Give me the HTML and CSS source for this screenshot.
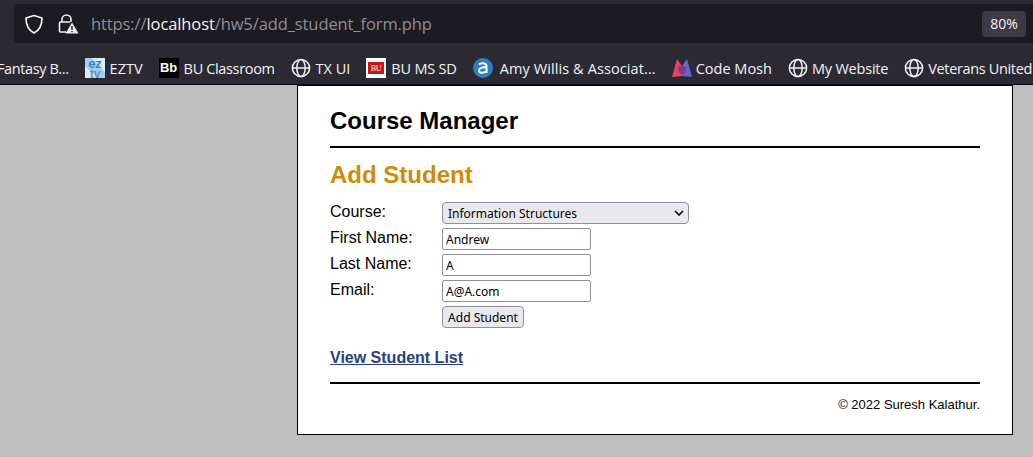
FILE: index.html
```html
<!DOCTYPE html>
<html lang="en">
<head>
<meta charset="UTF-8">
<meta name="viewport" content="width=device-width, initial-scale=1.0">
<title>Course Manager</title>
<link rel="stylesheet" href="styles.css">
</head>
<body>

<div class="browser">
  <div class="urlbar">
    <svg class="shield" width="20" height="22" viewBox="0 0 20 22" fill="none" stroke="#f2f2f4" stroke-width="1.7"><path d="M10 2.5 L18 5 C18 12 16 17 10 20 C4 17 2 12 2 5 Z" stroke-linejoin="round"/></svg>
    <svg class="lock" width="22" height="22" viewBox="0 0 22 22" fill="none"><path d="M5 9 V6.5 a4.5 4.5 0 0 1 9 0 V9" stroke="#f2f2f4" stroke-width="1.6"/><path d="M9 19 H3.5 a1 1 0 0 1 -1 -1 V10 a1 1 0 0 1 1 -1 H13" stroke="#f2f2f4" stroke-width="1.6"/><path d="M15 9.5 L21.5 20.5 H8.5 Z" fill="#f2f2f4"/><path d="M15 13 V17 M15 18 V19.2" stroke="#1c1b22" stroke-width="1.4"/></svg>
    <div class="url">https://<span class="host">localhost</span>/hw5/add_student_form.php</div>
    <div class="zoom">80%</div>
  </div>
  <div class="bookmarks">
    <span class="mark cut">Fantasy B...</span>
    <span class="mark">
      <svg width="20" height="20" viewBox="0 0 20 20"><rect width="20" height="20" fill="#dcebfa"/><path d="M0 0 L7 0 L20 14 L20 20 L12 20 L0 8 Z" fill="#a9cdf2"/><text x="10" y="10" font-size="13" font-weight="bold" font-family="Liberation Sans, sans-serif" fill="#3f7fd0" text-anchor="middle">ez</text><text x="10" y="19.5" font-size="12" font-weight="bold" font-family="Liberation Sans, sans-serif" fill="#5a94da" text-anchor="middle">tv</text></svg>
      EZTV
    </span>
    <span class="mark tight">
      <span class="bb">Bb</span>
      BU Classroom
    </span>
    <span class="mark">
      <svg width="20" height="20" viewBox="0 0 20 20" fill="none" stroke="#f2f2f4" stroke-width="1.5"><circle cx="10" cy="10" r="8.6"/><ellipse cx="10" cy="10" rx="4.2" ry="8.6"/><path d="M1.4 10 H18.6"/></svg>
      TX UI
    </span>
    <span class="mark slim">
      <svg width="20" height="20" viewBox="0 0 20 20"><rect width="20" height="20" fill="#fff"/><rect x="2" y="4" width="16" height="12" fill="#cc1414"/><text x="10" y="13" font-size="8" font-family="Liberation Serif, serif" fill="#fff" text-anchor="middle">BU</text></svg>
      BU MS SD
    </span>
    <span class="mark wide">
      <svg width="20" height="20" viewBox="0 0 20 20" fill="none"><circle cx="10" cy="10" r="10" fill="#2a7fc4"/><path d="M6 6.5 C8 4.5 13.5 4.5 13.5 8.5 V15 M13.5 9.5 C9 9 6 10 6 12.5 C6 15.5 11 15.5 13.5 13" stroke="#fff" stroke-width="2"/></svg>
      Amy Willis &amp; Associat...
    </span>
    <span class="mark close">
      <svg width="20" height="20" viewBox="0 0 20 20"><path d="M5 1 L10 8 L10 18 L0 19 Z" fill="#ec3f63"/><path d="M15 1 L10 8 L10 18 L20 19 Z" fill="#6a62c8"/><path d="M6 9 L10 7 L14 9 L13 15 L10 17 L7 15 Z" fill="#7a3c8c"/></svg>
      Code Mosh
    </span>
    <span class="mark close slim">
      <svg width="20" height="20" viewBox="0 0 20 20" fill="none" stroke="#f2f2f4" stroke-width="1.5"><circle cx="10" cy="10" r="8.6"/><ellipse cx="10" cy="10" rx="4.2" ry="8.6"/><path d="M1.4 10 H18.6"/></svg>
      My Website
    </span>
    <span class="mark close tight">
      <svg width="20" height="20" viewBox="0 0 20 20" fill="none" stroke="#f2f2f4" stroke-width="1.5"><circle cx="10" cy="10" r="8.6"/><ellipse cx="10" cy="10" rx="4.2" ry="8.6"/><path d="M1.4 10 H18.6"/></svg>
      Veterans United
    </span>
  </div>
</div>

<div class="page">
  <div class="sheet">
    <header class="top">
      <h1>Course Manager</h1>
    </header>
    <main>
      <h2>Add Student</h2>
      <form class="student-form">
        <label>Course:</label>
        <div class="select-wrap">
          <select class="course">
            <option>Information Structures</option>
          </select>
          <svg class="chevron" width="10" height="6" viewBox="0 0 10 6" fill="none" stroke="#000" stroke-width="1.6"><path d="M1 1 L5 5 L9 1"/></svg>
        </div>
        <label>First Name:</label>
        <input type="text" value="Andrew">
        <label>Last Name:</label>
        <input type="text" value="A">
        <label>Email:</label>
        <input type="text" value="A@A.com">
        <span></span>
        <div><button type="button">Add Student</button></div>
      </form>
      <p class="list-link"><a href="#">View Student List</a></p>
    </main>
    <footer class="bottom">
      <p>&copy; 2022 Suresh Kalathur.</p>
    </footer>
  </div>
</div>

</body>
</html>
```

FILE: styles.css
```css
html, body {
  margin: 0;
  padding: 0;
  height: 457px;
  overflow: hidden;
}
body {
  font-family: "Liberation Sans", Arial, sans-serif;
  background-color: #bfbfbf;
}

/* browser chrome */
.browser {
  box-sizing: border-box;
  height: 85px;
  padding-top: 4px;
  background-color: #2b2a33;
  border-bottom: 1px solid #0c0c0d;
  font-family: "Open Sans", sans-serif;
  color: #f2f2f4;
}
.urlbar {
  height: 39px;
  margin-left: 14px;
  background-color: #1c1b22;
  border-radius: 4px 0 0 4px;
  display: flex;
  align-items: center;
}
.shield {
  margin-left: 10px;
}
.lock {
  margin-left: 13px;
}
.url {
  margin-left: 12px;
  font-size: 16.5px;
  letter-spacing: -0.1px;
  color: #8f8f94;
}
.host {
  color: #f4f4f6;
}
.zoom {
  margin-left: auto;
  margin-right: 7px;
  width: 44px;
  height: 26px;
  line-height: 26px;
  text-align: center;
  border-radius: 4px;
  font-size: 14px;
  background-color: #3c3b46;
}
.bookmarks {
  margin-top: 9px;
  height: 32px;
  display: flex;
  align-items: center;
  gap: 16px;
  font-size: 14.5px;
  white-space: nowrap;
  overflow: hidden;
}
.mark {
  display: flex;
  align-items: center;
  gap: 5px;
  flex-shrink: 0;
}
.cut {
  margin-left: -3px;
  letter-spacing: -0.4px;
}
.tight {
  letter-spacing: -0.35px;
}
.slim {
  letter-spacing: -0.2px;
}
.wide {
  gap: 7px;
  letter-spacing: 0.1px;
}
.close {
  gap: 4px;
}
.bb {
  width: 20px;
  height: 20px;
  line-height: 20px;
  text-align: center;
  background-color: #000;
  font-family: "Liberation Sans", sans-serif;
  font-weight: bold;
  font-size: 13px;
  letter-spacing: 0;
  color: #fff;
}

/* page */
.page {
  padding-left: 297px;
}
.sheet {
  width: 650px;
  height: 348px;
  padding: 0 32px;
  background-color: #fff;
  border: 1px solid #000;
}
.top {
  border-bottom: 2px solid #000;
  height: 60px;
}
h1 {
  margin: 0;
  padding-top: 21px;
  font-size: 24px;
  line-height: 28px;
  color: #000;
}
h2 {
  margin: 0;
  padding-top: 13px;
  font-size: 24px;
  line-height: 28px;
  color: #cf8a08;
}
.student-form {
  margin-top: 13px;
  display: grid;
  grid-template-columns: 112px 1fr;
  grid-auto-rows: 26px;
  font-size: 16px;
}
.student-form label {
  padding-top: 1px;
  line-height: 18px;
}
.student-form input {
  box-sizing: border-box;
  width: 149px;
  height: 22px;
  padding: 1px 3px;
  border: 1px solid #8f8f9d;
  border-radius: 2px;
  font-family: "Noto Sans", sans-serif;
  font-size: 12px;
  color: #000;
}
.select-wrap {
  position: relative;
  width: 247px;
  height: 22px;
}
.course {
  appearance: none;
  box-sizing: border-box;
  width: 247px;
  height: 22px;
  padding-left: 5px;
  border: 1px solid #8f8f9d;
  border-radius: 4px;
  background-color: #e9e9ed;
  font-family: "Noto Sans", sans-serif;
  font-size: 12px;
  color: #000;
}
.chevron {
  position: absolute;
  right: 5px;
  top: 8px;
}
button {
  box-sizing: border-box;
  width: 82px;
  height: 22px;
  padding: 0;
  border: 1px solid #8f8f9d;
  border-radius: 4px;
  background-color: #e9e9ed;
  font-family: "Noto Sans", sans-serif;
  font-size: 12px;
  color: #000;
}
.list-link {
  margin: 17px 0 0;
  font-size: 16px;
  line-height: 18px;
  font-weight: bold;
}
.list-link a {
  color: #2a3f80;
}
.bottom {
  margin-top: 15px;
  border-top: 2px solid #000;
}
.bottom p {
  margin: 14px 0 0;
  text-align: right;
  font-size: 13px;
  line-height: 14px;
}
```
